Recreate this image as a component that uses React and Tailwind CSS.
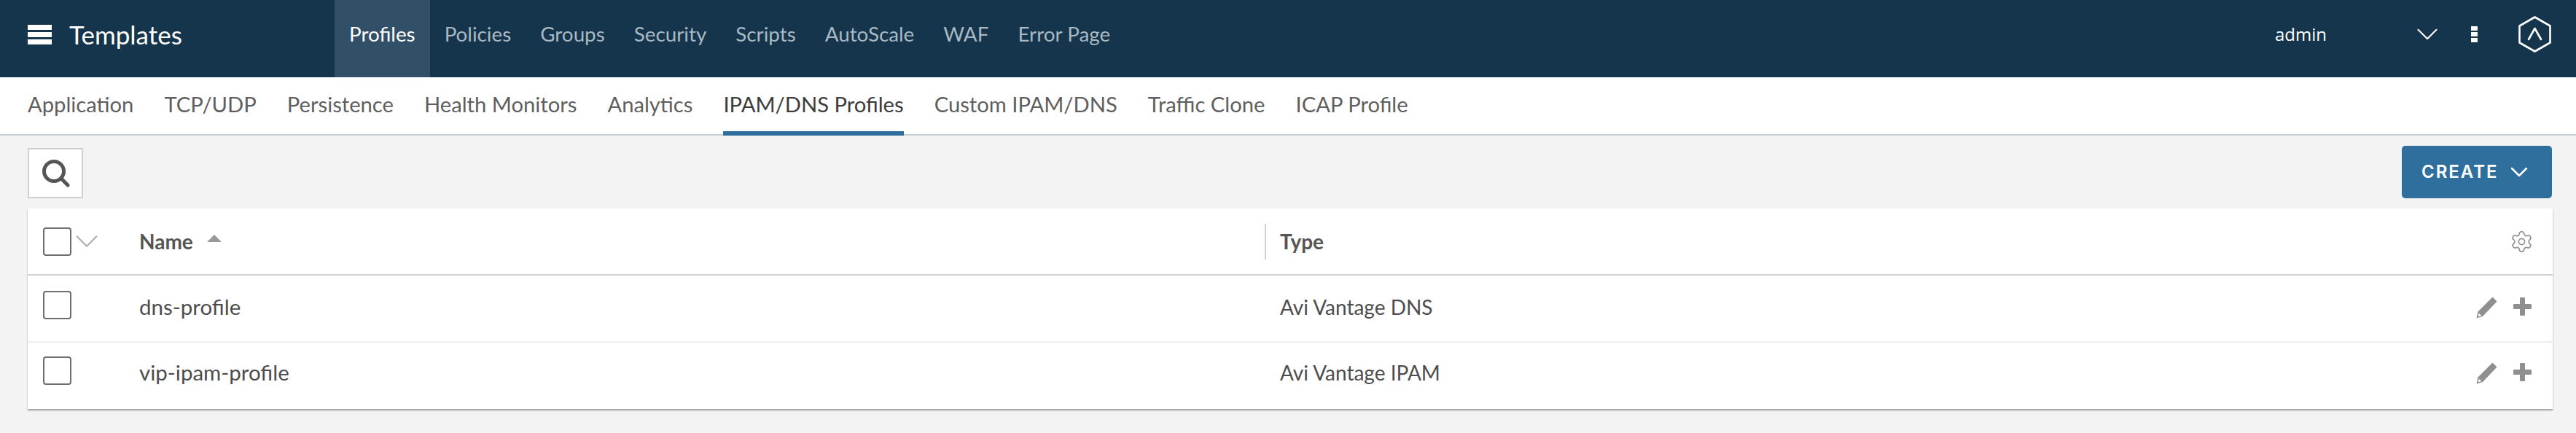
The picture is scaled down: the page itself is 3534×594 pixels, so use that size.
import React from 'react'
import { ChevronDown, Settings } from 'lucide-react'

const topTabs = ['Profiles', 'Policies', 'Groups', 'Security', 'Scripts', 'AutoScale', 'WAF', 'Error Page']
const subTabs = ['Application', 'TCP/UDP', 'Persistence', 'Health Monitors', 'Analytics', 'IPAM/DNS Profiles', 'Custom IPAM/DNS', 'Traffic Clone', 'ICAP Profile']
const rows = [
  { name: 'dns-profile', type: 'Avi Vantage DNS', cls: 'h-[92px] pt-[21px] border-b-2 border-[#eeeeee]' },
  { name: 'vip-ipam-profile', type: 'Avi Vantage IPAM', cls: 'h-[91px] pt-[19px]' },
]

function Checkbox() {
  return <div className="w-[39px] h-[39px] shrink-0 rounded-[4px] border-2 border-[#6e6e6e] bg-white" />
}

function PencilIcon() {
  return (
    <svg width="29" height="30" viewBox="0 0 29 30">
      <path d="M22.5 0.5 L28.5 6.5 L9 27 L0.5 29.5 L2.5 20.5 Z" fill="#8f8f8f" />
      <path d="M3.8 22.5 L7.5 26 L2.8 27.3 Z" fill="#ffffff" />
    </svg>
  )
}

function PlusIcon() {
  return (
    <svg width="25" height="25" viewBox="0 0 25 25" fill="#8f8f8f">
      <rect x="9" y="0" width="7" height="25" rx="1" />
      <rect x="0" y="9" width="25" height="7" rx="1" />
    </svg>
  )
}

function SearchIcon() {
  return (
    <svg width="39" height="39" viewBox="0 0 39 39" fill="none" stroke="#555555" strokeWidth="5" strokeLinecap="round">
      <circle cx="17" cy="17" r="13.5" />
      <path d="M27 27 L36 36" />
    </svg>
  )
}

function TopBar() {
  return (
    <header className="h-[106px] bg-[#14354b] flex items-stretch">
      <div className="w-[459px] shrink-0 flex items-center pl-[38px] pb-[12px]">
        <div className="w-[33px] flex flex-col gap-[3px]">
          <div className="h-[7px] bg-white" />
          <div className="h-[7px] bg-white" />
          <div className="h-[7px] bg-white" />
        </div>
        <span className="ml-[24px] text-[35px] leading-none text-white">Templates</span>
      </div>
      {topTabs.map((tab, i) => (
        <div
          key={tab}
          className={`flex items-center px-[20px] pb-[12px] text-[27.8px] leading-none ${i === 0 ? 'bg-[#324f68] text-white' : 'text-[#a9b8c3]'}`}
        >
          {tab}
        </div>
      ))}
      <div className="ml-auto flex items-center pb-[12px] pr-[34px]">
        <span className="text-[24px] leading-none text-white font-['Open_Sans',sans-serif]">admin</span>
        <ChevronDown className="ml-[113px] w-[50px] h-[50px] text-white" strokeWidth={1} />
        <div className="ml-[35px] w-[9px] flex flex-col gap-[2px]">
          <div className="h-[6px] bg-white" />
          <div className="h-[6px] bg-white" />
          <div className="h-[6px] bg-white" />
        </div>
        <svg className="ml-[56px]" width="45" height="50" viewBox="0 0 45 50" fill="none" stroke="white" strokeWidth="2.6" strokeLinejoin="round" strokeLinecap="round">
          <path d="M22.5 1.5 L43.5 13.5 V36.5 L22.5 48.5 L1.5 36.5 V13.5 Z" />
          <path d="M14 32 L22.5 17 L31 32" />
        </svg>
      </div>
    </header>
  )
}

function SubNav() {
  return (
    <nav className="h-[80px] bg-white border-b-2 border-[#c9cfd1] flex gap-[42px] pl-[38px]">
      {subTabs.map(tab => (
        <div
          key={tab}
          className={`h-[80px] pt-[20px] text-[29.2px] leading-[34px] ${tab === 'IPAM/DNS Profiles' ? 'text-[#3d3d3d] border-b-[6px] border-[#2e6f9e]' : 'text-[#5f5f5f]'}`}
        >
          {tab}
        </div>
      ))}
    </nav>
  )
}

function Toolbar() {
  return (
    <div className="h-[100px] pt-[14px] pl-[38px] pr-[33px] flex items-start justify-between">
      <button className="mt-[3px] w-[76px] h-[69px] bg-white border-2 border-[#cfcfcf] flex items-center justify-center">
        <SearchIcon />
      </button>
      <button className="w-[206px] h-[72px] bg-[#2e6f9e] rounded-[5px] flex items-center pl-[27px] text-white">
        <span className="text-[24px] leading-none font-semibold tracking-[2px] font-['Inter',sans-serif]">CREATE</span>
        <ChevronDown className="ml-[8px] w-[40px] h-[40px]" strokeWidth={1.5} />
      </button>
    </div>
  )
}

function ProfileTable() {
  return (
    <div className="ml-[38px] mr-[32px] bg-white shadow-[0_2px_2px_rgba(0,0,0,0.35)]">
      <div className="h-[92px] border-b-2 border-[#d0d0d0] flex items-center pl-[21px] pr-[26px] text-[#555555]">
        <Checkbox />
        <ChevronDown className="ml-[-6px] w-[54px] h-[54px] text-[#a8a8a8]" strokeWidth={0.8} />
        <div className="ml-[45px] w-[1544px] flex items-center">
          <span className="text-[28px] leading-none font-bold">Name</span>
          <div className="ml-[19px] mb-[8px] w-0 h-0 border-x-[10px] border-x-transparent border-b-[10px] border-b-[#999999]" />
        </div>
        <div className="h-[49px] w-[2px] bg-[#d0d0d0]" />
        <span className="ml-[19px] text-[28px] leading-none font-bold">Type</span>
        <Settings className="ml-auto w-[33px] h-[33px] text-[#8f8f8f]" strokeWidth={1.2} />
      </div>
      {rows.map(row => (
        <div key={row.name} className={`flex pl-[21px] pr-[29px] text-[#4d4d4d] ${row.cls}`}>
          <Checkbox />
          <div className="ml-[93px] w-[1565px] mt-[5px] text-[29.5px] leading-[34px]">{row.name}</div>
          <div className="mt-[5px] text-[28px] leading-[34px]">{row.type}</div>
          <div className="ml-auto mt-[8px] flex items-start">
            <PencilIcon />
            <div className="ml-[22px] mt-[1px]">
              <PlusIcon />
            </div>
          </div>
        </div>
      ))}
    </div>
  )
}

export default function App() {
  return (
    <div className="min-h-screen bg-[#f3f3f3] font-['Lato',sans-serif]">
      <TopBar />
      <SubNav />
      <Toolbar />
      <ProfileTable />
    </div>
  )
}
